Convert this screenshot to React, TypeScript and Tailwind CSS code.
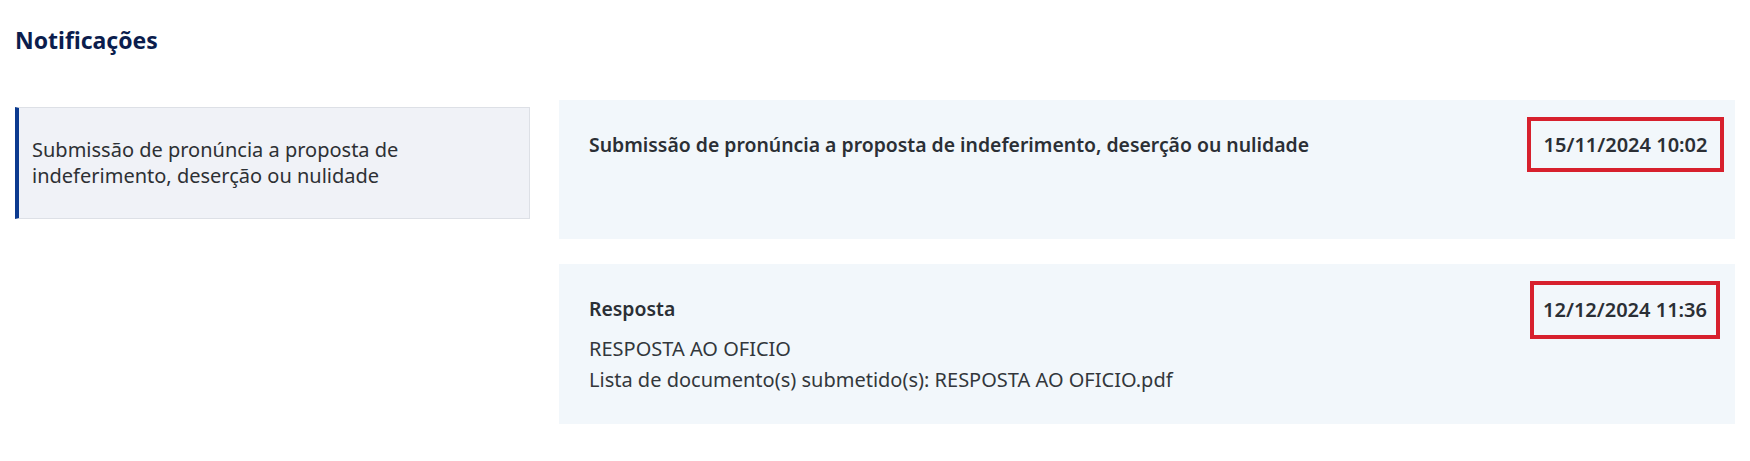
import React from 'react'

type Notice = {
  title: string
  date: string
  lines: string[]
  height: string
  box: string
  pad: string
}

const notices: Notice[] = [
  {
    title: 'Submissão de pronúncia a proposta de indeferimento, deserção ou nulidade',
    date: '15/11/2024 10:02',
    lines: [],
    height: 'h-[139px]',
    box: 'h-[55px] w-[197px]',
    pad: 'pr-[11px]',
  },
  {
    title: 'Resposta',
    date: '12/12/2024 11:36',
    lines: ['RESPOSTA AO OFICIO', 'Lista de documento(s) submetido(s): RESPOSTA AO OFICIO.pdf'],
    height: 'h-[160px]',
    box: 'h-[58px] w-[190px]',
    pad: 'pr-[15px]',
  },
]

function NoticeCard({ n }: { n: Notice }) {
  return (
    <div className={`flex items-start justify-between bg-[#f2f7fb] pl-[30px] ${n.height} ${n.pad}`}>
      <div className="pt-[31px]">
        <h3 className="text-[19.4px] font-semibold leading-[28px] text-[#2b2f35]">{n.title}</h3>
        {n.lines.length ? (
          <div className="mt-[10px] text-[20px] leading-[31px] text-[#33373c]">
            {n.lines.map((l) => (
              <p key={l}>{l}</p>
            ))}
          </div>
        ) : null}
      </div>
      <div
        className={`mt-[17px] flex shrink-0 items-center justify-center border-4 border-[#d7202d] ${n.box}`}
      >
        <span className="text-[20px] font-semibold leading-none text-[#2b2f35]">{n.date}</span>
      </div>
    </div>
  )
}

export default function App() {
  return (
    <div
      className="min-h-screen bg-white px-[15px] pt-[24px]"
      style={{ fontFamily: '"Noto Sans", "Open Sans", sans-serif' }}
    >
      <h1 className="text-[23px] font-bold leading-[32px] text-[#0b1d4d]">Notificações</h1>

      <div className="mt-[44px] flex items-start gap-[29px]">
        <div className="mt-[7px] flex h-[112px] w-[515px] shrink-0 items-center border border-l-4 border-[#dde0e6] border-l-[#0b3a8f] bg-[#f0f2f7] pl-[13px] pr-4">
          <p className="text-[20px] leading-[26px] text-[#2d3034]">
            Submissão de pronúncia a proposta de
            <br />
            indeferimento, deserção ou nulidade
          </p>
        </div>

        <div className="flex flex-1 flex-col gap-[25px]">
          {notices.map((n) => (
            <NoticeCard key={n.date} n={n} />
          ))}
        </div>
      </div>
    </div>
  )
}
